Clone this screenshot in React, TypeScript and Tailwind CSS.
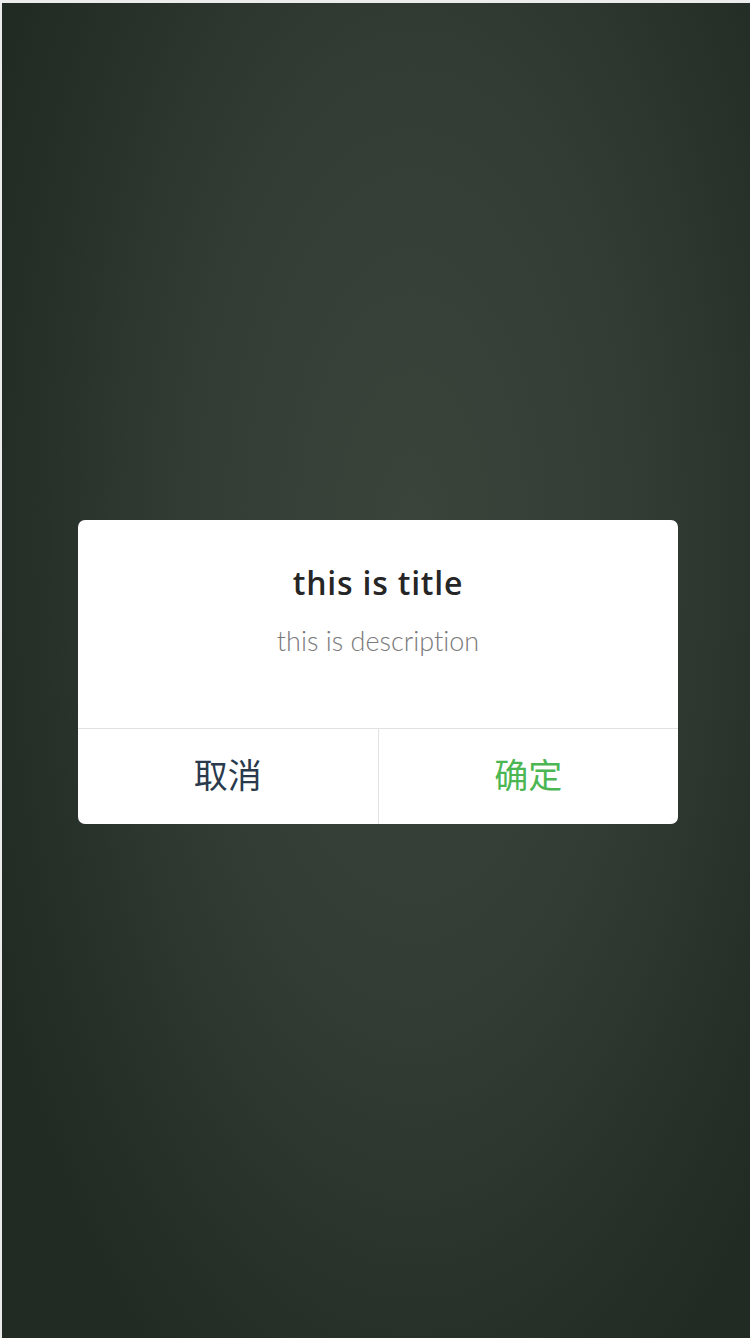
export default function App() {
  return (
    <div className="h-[1338px] w-[750px] overflow-hidden bg-[#ececec] pl-[2px] pt-[3px]">
      <div className="flex h-full items-center justify-center bg-[radial-gradient(ellipse_62%_75%_at_55%_40%,#3a443b_0%,#333d35_45%,#28302a_80%,#222a24_100%)] pl-[4px] pt-[2px]">
        <div className="w-[600px] overflow-hidden rounded-[7px] bg-white">
          <div className="flex h-[208px] flex-col items-center pt-[43px] [font-variant-ligatures:none]">
            <h2 className="font-['Open_Sans','Lato',sans-serif] text-[32px] font-semibold leading-[40px] tracking-[0.8px] text-[#262626]">this is title</h2>
            <p className="mt-[20px] font-['Lato','Noto_Sans',sans-serif] text-[27px] font-light leading-[36px] text-[#7a7a7a]">this is description</p>
          </div>
          <div className="flex h-[96px] border-t border-[#e2e2e2] font-['Noto_Sans_CJK_SC','Noto_Sans',sans-serif] text-[34px] leading-none">
            <button className="flex flex-1 items-center justify-center border-r border-[#e2e2e2] pb-[4px] text-[#2a3a4d]">取消</button>
            <button className="flex flex-1 items-center justify-center pb-[4px] text-[#4cb653]">确定</button>
          </div>
        </div>
      </div>
    </div>
  )
}
